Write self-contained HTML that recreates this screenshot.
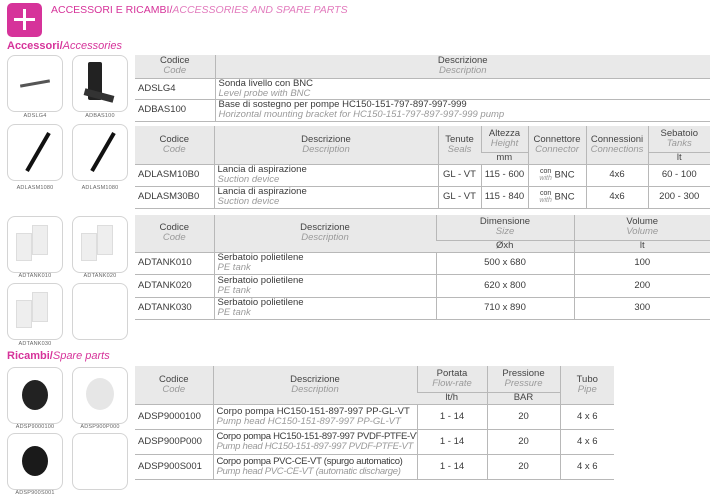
<!DOCTYPE html>
<html><head><meta charset="utf-8"><style>
*{margin:0;padding:0;box-sizing:border-box}
body{width:719px;height:500px;background:#fff;position:relative;overflow:hidden;font-family:"Liberation Sans",sans-serif;color:#3a3a3a}
.abs{position:absolute}
.pk{color:#d6339a}
.th{position:absolute;width:56px;height:57px;border:1px solid #d4d4d4;border-radius:8px;background:#fff}
.lb{position:absolute;width:56px;text-align:center;font-size:5.5px;color:#666;letter-spacing:.2px}
table{position:absolute;border-collapse:collapse;table-layout:fixed;font-size:9.5px}
td{border-bottom:1px solid #b8b8b8;border-left:1px solid #b8b8b8;padding:0 3px;line-height:10px;white-space:nowrap;overflow:hidden}
td:first-child{border-left:none}
.h td{background:#e9e9e9;text-align:center;color:#444}
i{color:#9a9a9a;font-style:italic}
.c{text-align:center}
.s{font-size:7px;line-height:7px;display:inline-block;vertical-align:middle;text-align:center}
</style></head><body>
<div class="abs" style="left:7px;top:3px;width:35px;height:34px;background:#d6339a;border-radius:5px"></div>
<div class="abs" style="left:14px;top:18px;width:21px;height:3px;background:#fff"></div>
<div class="abs" style="left:23px;top:9px;width:3px;height:21px;background:#fff"></div>
<div class="abs pk" style="left:51px;top:4px;font-size:10.5px">ACCESSORI E RICAMBI/<i style="color:#e27bbd">ACCESSORIES AND SPARE PARTS</i></div>
<div class="abs pk" style="left:7px;top:40px;font-size:11px;font-weight:bold">Accessori/<i style="color:#d6339a;font-weight:normal">Accessories</i></div>
<div class="abs pk" style="left:7px;top:350px;font-size:11px;font-weight:bold">Ricambi/<i style="color:#d6339a;font-weight:normal">Spare parts</i></div>

<div class="th" style="left:7px;top:55px"></div><div class="th" style="left:72px;top:55px"></div>
<div class="lb" style="left:7px;top:113px">ADSLG4</div><div class="lb" style="left:72px;top:113px">ADBAS100</div>
<div class="th" style="left:7px;top:124px"></div><div class="th" style="left:72px;top:124px"></div>
<div class="lb" style="left:7px;top:185px">ADLASM1080</div><div class="lb" style="left:72px;top:185px">ADLASM1080</div>
<div class="th" style="left:7px;top:216px"></div><div class="th" style="left:72px;top:216px"></div>
<div class="lb" style="left:7px;top:273px">ADTANK010</div><div class="lb" style="left:72px;top:273px">ADTANK020</div>
<div class="th" style="left:7px;top:283px"></div><div class="th" style="left:72px;top:283px"></div>
<div class="lb" style="left:7px;top:341px">ADTANK030</div>
<div class="th" style="left:7px;top:367px"></div><div class="th" style="left:72px;top:367px"></div>
<div class="lb" style="left:7px;top:424px">ADSP9000100</div><div class="lb" style="left:72px;top:424px">ADSP900P000</div>
<div class="th" style="left:7px;top:433px"></div><div class="th" style="left:72px;top:433px"></div>
<div class="lb" style="left:7px;top:490px">ADSP900S001</div>
<div class="abs" style="left:20px;top:82px;width:30px;height:3px;background:#555;transform:rotate(-10deg)"></div>
<div class="abs" style="left:88px;top:62px;width:14px;height:38px;background:#222;border-radius:2px"></div>
<div class="abs" style="left:84px;top:92px;width:30px;height:7px;background:#333;transform:rotate(15deg)"></div>
<div class="abs" style="left:16px;top:150px;width:44px;height:4px;background:#111;transform:rotate(-60deg)"></div>
<div class="abs" style="left:81px;top:150px;width:44px;height:4px;background:#111;transform:rotate(-60deg)"></div>
<div class="abs" style="left:16px;top:233px;width:16px;height:28px;background:#eee;border:1px solid #ddd"></div>
<div class="abs" style="left:32px;top:225px;width:16px;height:30px;background:#eee;border:1px solid #ddd"></div>
<div class="abs" style="left:81px;top:233px;width:16px;height:28px;background:#eee;border:1px solid #ddd"></div>
<div class="abs" style="left:97px;top:225px;width:16px;height:30px;background:#eee;border:1px solid #ddd"></div>
<div class="abs" style="left:16px;top:300px;width:16px;height:28px;background:#eee;border:1px solid #ddd"></div>
<div class="abs" style="left:32px;top:292px;width:16px;height:30px;background:#eee;border:1px solid #ddd"></div>
<div class="abs" style="left:22px;top:380px;width:26px;height:30px;background:#222;border-radius:50%"></div>
<div class="abs" style="left:86px;top:378px;width:28px;height:32px;background:#e6e6e6;border-radius:50%"></div>
<div class="abs" style="left:22px;top:446px;width:26px;height:30px;background:#1a1a1a;border-radius:50%"></div>

<table style="left:135px;top:55px;width:575px">
<col style="width:80px"><col>
<tr class="h" style="height:23px"><td>Codice<br><i>Code</i></td><td>Descrizione<br><i>Description</i></td></tr>
<tr style="height:21px"><td>ADSLG4</td><td>Sonda livello con BNC<br><i>Level probe with BNC</i></td></tr>
<tr style="height:22px"><td>ADBAS100</td><td>Base di sostegno per pompe HC150-151-797-897-997-999<br><i>Horizontal mounting bracket for HC150-151-797-897-997-999 pump</i></td></tr>
</table>

<table style="left:135px;top:126px;width:575px">
<col style="width:79px"><col style="width:224px"><col style="width:43px"><col style="width:47px"><col style="width:58px"><col style="width:62px"><col style="width:62px">
<tr class="h" style="height:26px"><td rowspan="2">Codice<br><i>Code</i></td><td rowspan="2">Descrizione<br><i>Description</i></td><td rowspan="2">Tenute<br><i>Seals</i></td><td>Altezza<br><i>Height</i></td><td rowspan="2">Connettore<br><i>Connector</i></td><td rowspan="2">Connessioni<br><i>Connections</i></td><td>Sebatoio<br><i>Tanks</i></td></tr>
<tr class="h" style="height:12px"><td>mm</td><td>lt</td></tr>
<tr style="height:22px"><td>ADLASM10B0</td><td>Lancia di aspirazione<br><i>Suction device</i></td><td class="c">GL - VT</td><td class="c">115 - 600</td><td class="c"><span class="s">con<br><i>with</i></span> BNC</td><td class="c">4x6</td><td class="c">60 - 100</td></tr>
<tr style="height:22px"><td>ADLASM30B0</td><td>Lancia di aspirazione<br><i>Suction device</i></td><td class="c">GL - VT</td><td class="c">115 - 840</td><td class="c"><span class="s">con<br><i>with</i></span> BNC</td><td class="c">4x6</td><td class="c">200 - 300</td></tr>
</table>

<table style="left:135px;top:215px;width:575px">
<col style="width:79px"><col style="width:222px"><col style="width:138px"><col>
<tr class="h" style="height:25px"><td rowspan="2">Codice<br><i>Code</i></td><td rowspan="2">Descrizione<br><i>Description</i></td><td>Dimensione<br><i>Size</i></td><td>Volume<br><i>Volume</i></td></tr>
<tr class="h" style="height:12px"><td>Øxh</td><td>lt</td></tr>
<tr style="height:22px"><td>ADTANK010</td><td>Serbatoio polietilene<br><i>PE tank</i></td><td class="c">500 x 680</td><td class="c">100</td></tr>
<tr style="height:23px"><td>ADTANK020</td><td>Serbatoio polietilene<br><i>PE tank</i></td><td class="c">620 x 800</td><td class="c">200</td></tr>
<tr style="height:22px"><td>ADTANK030</td><td>Serbatoio polietilene<br><i>PE tank</i></td><td class="c">710 x 890</td><td class="c">300</td></tr>
</table>

<table style="left:135px;top:366px;width:479px">
<col style="width:78px"><col style="width:204px"><col style="width:70px"><col style="width:73px"><col>
<tr class="h" style="height:26px"><td rowspan="2">Codice<br><i>Code</i></td><td rowspan="2">Descrizione<br><i>Description</i></td><td>Portata<br><i>Flow-rate</i></td><td>Pressione<br><i>Pressure</i></td><td rowspan="2">Tubo<br><i>Pipe</i></td></tr>
<tr class="h" style="height:12px"><td>lt/h</td><td>BAR</td></tr>
<tr style="height:25px"><td>ADSP9000100</td><td>Corpo pompa HC150-151-897-997 PP-GL-VT<br><i>Pump head HC150-151-897-997 PP-GL-VT</i></td><td class="c">1 - 14</td><td class="c">20</td><td class="c">4 x 6</td></tr>
<tr style="height:25px"><td>ADSP900P000</td><td style="letter-spacing:-.3px">Corpo pompa HC150-151-897-997 PVDF-PTFE-VT<br><i>Pump head HC150-151-897-997 PVDF-PTFE-VT</i></td><td class="c">1 - 14</td><td class="c">20</td><td class="c">4 x 6</td></tr>
<tr style="height:25px"><td>ADSP900S001</td><td style="letter-spacing:-.3px">Corpo pompa PVC-CE-VT (spurgo automatico)<br><i>Pump head PVC-CE-VT (automatic discharge)</i></td><td class="c">1 - 14</td><td class="c">20</td><td class="c">4 x 6</td></tr>
</table>
</body></html>
